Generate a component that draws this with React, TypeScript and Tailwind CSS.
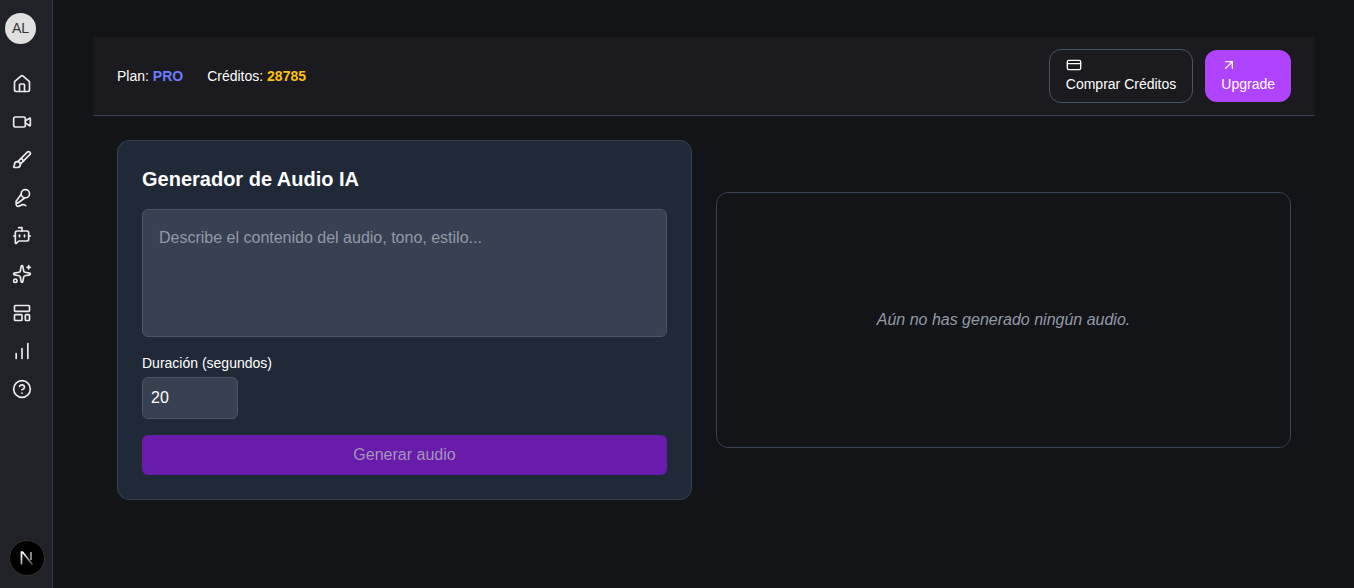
import {
  ArrowUpRight,
  BotMessageSquare,
  Brush,
  ChartNoAxesColumnIncreasing,
  CircleHelp,
  CreditCard,
  House,
  LayoutTemplate,
  MicVocal,
  Sparkles,
  Video,
} from "lucide-react";

const navIcons = [
  House,
  Video,
  Brush,
  MicVocal,
  BotMessageSquare,
  Sparkles,
  LayoutTemplate,
  ChartNoAxesColumnIncreasing,
  CircleHelp,
];

function Sidebar() {
  return (
    <aside className="w-[53px] shrink-0 h-screen bg-[#212228] border-r border-[#2c3e50] flex flex-col items-start pt-[13px] pb-[12px]">
      <div className="ml-[5px] w-[31px] h-[31px] shrink-0 rounded-full bg-[#e0e0e0] text-[#333] text-[14px] flex items-center justify-center">
        AL
      </div>
      <nav className="ml-[12px] mt-[30px] flex flex-col items-center gap-[18.1px]">
        {navIcons.map((Icon, i) => (
          <Icon key={i} size={20} strokeWidth={2} className="text-[#ebebeb]" />
        ))}
      </nav>
      <div className="ml-[9px] mt-auto w-[36px] h-[36px] rounded-full bg-black border border-[#333] flex items-center justify-center">
        <svg width="14" height="14" viewBox="0 0 14 14" fill="none">
          <defs>
            <linearGradient id="n-fade" x1="3" y1="3" x2="12" y2="14" gradientUnits="userSpaceOnUse">
              <stop offset="0" stopColor="#ffffff" />
              <stop offset="1" stopColor="#ffffff" stopOpacity="0.25" />
            </linearGradient>
          </defs>
          <path d="M1.5 13.5V1H2.5L12.5 13.5" stroke="url(#n-fade)" strokeWidth="1.7" />
          <path d="M11 1V9" stroke="#bbbbbb" strokeWidth="1.4" />
        </svg>
      </div>
    </aside>
  );
}

function Header() {
  return (
    <header className="h-[79px] bg-[#1a1a1f] border-b border-[#374151] px-6 flex items-center justify-between">
      <div className="flex items-center gap-6 text-[14px] text-white">
        <span>
          Plan: <b className="text-[#6c7bff]">PRO</b>
        </span>
        <span>
          Créditos: <b className="text-[#ffc107]">28785</b>
        </span>
      </div>
      <div className="flex items-center gap-3">
        <button className="h-[54px] px-4 rounded-xl border border-[#4b5563] text-white text-[14px] flex flex-col items-start justify-center">
          <CreditCard size={16} strokeWidth={2} className="mb-px" />
          Comprar Créditos
        </button>
        <button className="h-[52px] px-4 rounded-xl bg-[#b043ff] text-white text-[14px] flex flex-col items-start justify-center">
          <ArrowUpRight size={16} strokeWidth={2} className="mb-px" />
          Upgrade
        </button>
      </div>
    </header>
  );
}

function GeneratorCard() {
  return (
    <section className="w-[575px] h-[360px] rounded-xl bg-[#1f2937] border border-[#374151] p-6">
      <h2 className="text-[20px] leading-[28px] font-bold text-white mb-4">
        Generador de Audio IA
      </h2>
      <textarea
        readOnly
        placeholder="Describe el contenido del audio, tono, estilo..."
        className="block w-full h-[128px] rounded-md bg-[#374151] border border-[#4b5563] px-4 py-4 text-[16px] leading-[24px] text-white placeholder:text-[#929aa6] outline-none resize-none"
      />
      <label className="block mt-[16px] text-[14px] leading-[20px] text-white">
        Duración (segundos)
      </label>
      <input
        readOnly
        value="20"
        className="block mt-[4px] w-[96px] h-[42px] rounded-md bg-[#374151] border border-[#4b5563] px-2 text-[16px] text-white outline-none"
      />
      <button className="mt-4 w-full h-10 rounded-md bg-[#691bac] text-[16px] text-[#a594b8]">
        Generar audio
      </button>
    </section>
  );
}

export default function App() {
  return (
    <div
      className="flex h-screen overflow-hidden bg-[#121418]"
      style={{ fontFamily: '"Liberation Sans", Arial, sans-serif' }}
    >
      <Sidebar />
      <main className="flex-1 pl-10 pr-[39px] pt-[37px]">
        <Header />
        <div className="mt-6 px-6 flex items-center gap-6">
          <GeneratorCard />
          <section className="flex-1 h-[256px] rounded-xl border border-[#374151] flex items-center justify-center">
            <p className="italic text-[16px] text-[#929aa6]">
              Aún no has generado ningún audio.
            </p>
          </section>
        </div>
      </main>
    </div>
  );
}
